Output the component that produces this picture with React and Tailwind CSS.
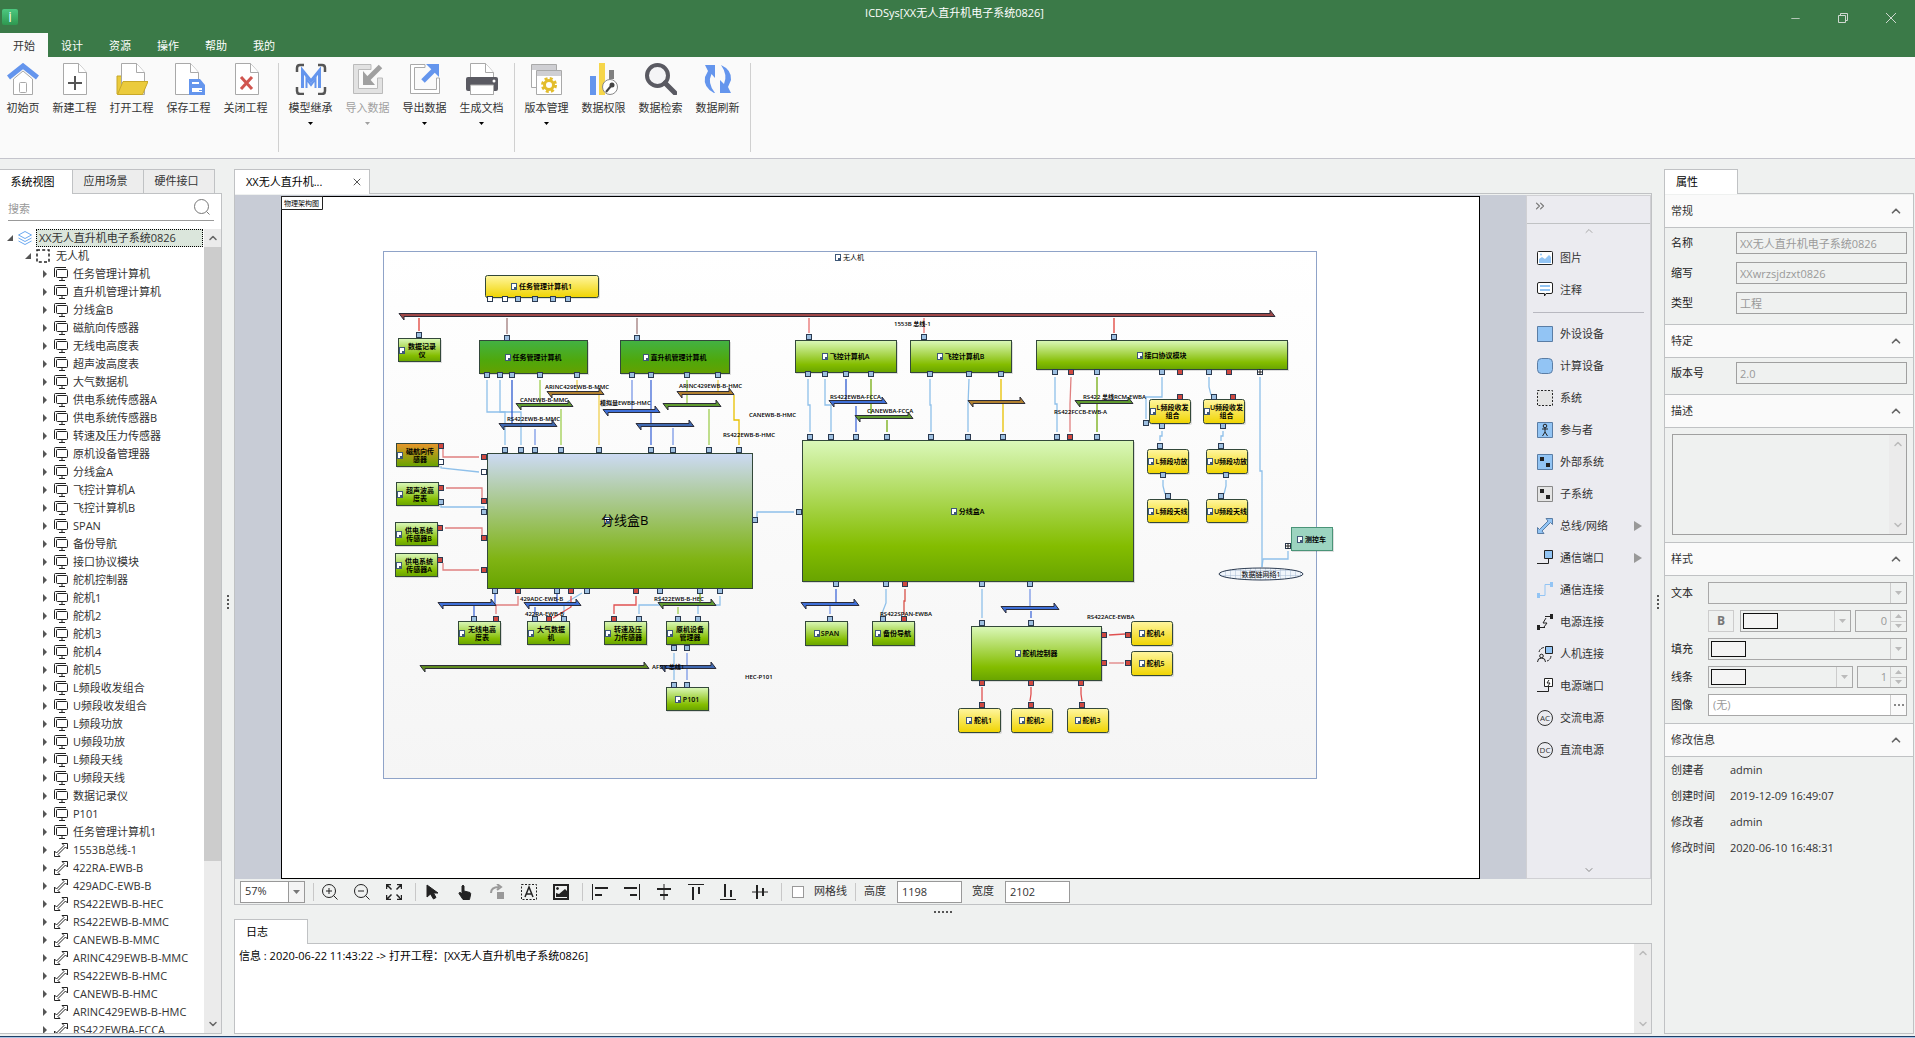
import React, { useState } from 'react';
import { ChevronDown, ChevronUp, ChevronsRight, Minus, X } from 'lucide-react';

const RIBBON_TABS = ['开始', '设计', '资源', '操作', '帮助', '我的'];

const RIBBON_GROUPS = [
  [
    { label: '初始页', icon: 'home', narrow: true },
    { label: '新建工程', icon: 'new' },
    { label: '打开工程', icon: 'open' },
    { label: '保存工程', icon: 'save' },
    { label: '关闭工程', icon: 'close' },
  ],
  [
    { label: '模型继承', icon: 'model', menu: true },
    { label: '导入数据', icon: 'import', menu: true, disabled: true },
    { label: '导出数据', icon: 'export', menu: true },
    { label: '生成文档', icon: 'print', menu: true },
  ],
  [
    { label: '版本管理', icon: 'version', menu: true },
    { label: '数据权限', icon: 'permission' },
    { label: '数据检索', icon: 'search' },
    { label: '数据刷新', icon: 'refresh' },
  ],
];

const DEVICES = [
  '任务管理计算机', '直升机管理计算机', '分线盒B', '磁航向传感器', '无线电高度表', '超声波高度表',
  '大气数据机', '供电系统传感器A', '供电系统传感器B', '转速及压力传感器', '原机设备管理器', '分线盒A',
  '飞控计算机A', '飞控计算机B', 'SPAN', '备份导航', '接口协议模块', '舵机控制器', '舵机1', '舵机2',
  '舵机3', '舵机4', '舵机5', 'L频段收发组合', 'U频段收发组合', 'L频段功放', 'U频段功放', 'L频段天线',
  'U频段天线', '数据记录仪', 'P101', '任务管理计算机1',
];

const BUSES = [
  '1553B总线-1', '422RA-EWB-B', '429ADC-EWB-B', 'RS422EWB-B-HEC', 'RS422EWB-B-MMC', 'CANEWB-B-MMC',
  'ARINC429EWB-B-MMC', 'RS422EWB-B-HMC', 'CANEWB-B-HMC', 'ARINC429EWB-B-HMC', 'RS422EWBA-FCCA',
];

const PALETTE_TOP = [
  { label: '图片', icon: 'image' },
  { label: '注释', icon: 'note' },
];

const PALETTE = [
  { label: '外设设备', icon: 'square' },
  { label: '计算设备', icon: 'round' },
  { label: '系统', icon: 'system' },
  { label: '参与者', icon: 'actor' },
  { label: '外部系统', icon: 'external' },
  { label: '子系统', icon: 'sub' },
  { label: '总线/网络', icon: 'bus', menu: true },
  { label: '通信端口', icon: 'port', menu: true },
  { label: '通信连接', icon: 'link' },
  { label: '电源连接', icon: 'power' },
  { label: '人机连接', icon: 'human' },
  { label: '电源端口', icon: 'powerPort' },
  { label: '交流电源', icon: 'ac' },
  { label: '直流电源', icon: 'dc' },
];

/* ---------- icons ---------- */

const Sheet = ({ x = 4 }) => (
  <g fill="#fff" stroke="#a9a9a9">
    <path d={`M${x + 0.5} .5h15l8 9v22h-23z`} />
    <path d={`M${x + 15.5} .5v9h8`} />
  </g>
);

const RIBBON_ICONS = {
  home: (
    <>
      <path d="M6.500 16v15.500h19V16L16 8z" fill="#fff" stroke="#a9a9a9" />
      <rect x="12.500" y="19.500" width="7" height="10" rx="1" fill="none" stroke="#a9a9a9" />
      <path d="M1.500 14.500 16 3l14.500 11.500" fill="none" stroke="#6495ed" strokeWidth="5" />
    </>
  ),
  new: (
    <>
      <Sheet />
      <path d="M16 13v14M9 20h14" stroke="#555" strokeWidth="2" />
    </>
  ),
  open: (
    <>
      <path d="M1 31V13h6v18z" fill="#ebcb3c" stroke="#c8a828" />
      <Sheet x={5} />
      <path d="M7 18.500h25L26.500 31.500H1.500z" fill="#ebcb3c" stroke="#c8a828" />
    </>
  ),
  save: (
    <>
      <Sheet x={2} />
      <path d="M16 16h11l5 6v10H16z" fill="#6495ed" />
      <path d="M19 19h7v2h-7zM19 25h10v4H19z" fill="#fff" />
      <path d="M26 27h3v1h-3z" fill="#6495ed" />
    </>
  ),
  close: (
    <>
      <Sheet x={5} />
      <path d="m11 14 11 12M22 14 11 26" stroke="#d0554f" strokeWidth="3" />
    </>
  ),
  model: (
    <>
      <path d="M2 9V5q0-3 3-3h4M23 2h4q3 0 3 3v4M30 24v4q0 3-3 3h-4M9 31H5q-3 0-3-3v-4" fill="none" stroke="#555" strokeWidth="2.500" />
      <path d="M7.500 25V7.500L16 18l8.500-10.500V25" fill="none" stroke="#6495ed" strokeWidth="3" />
      <path d="M11.500 25v-9l4.500 6 4.500-6v9" fill="none" stroke="#6495ed" strokeWidth="2" />
    </>
  ),
  import: (
    <>
      <path d="M19 1.500H1.500v29h29V15h-5v10.500h-19v-19H19z" fill="#e2e2e2" stroke="#bbb" />
      <path d="M28.500 3.500 15 17" stroke="#a0a0a0" strokeWidth="5" />
      <path d="M11 8v14h12z" fill="#a0a0a0" />
    </>
  ),
  export: (
    <>
      <path d="M16 1.500H1.500v29h29V15h-3v11.500h-22v-22H16z" fill="#fff" stroke="#a9a9a9" />
      <path d="M14 18 26 6" stroke="#6495ed" strokeWidth="5" />
      <path d="M17 1h13v13z" fill="#6495ed" />
    </>
  ),
  print: (
    <>
      <Sheet />
      <rect y="14" width="32" height="14" rx="2" fill="#5a5a62" />
      <path d="M4.500 22h23v9.500h-23z" fill="#fff" stroke="#a9a9a9" />
      <circle cx="28" cy="18" r="1.500" fill="#fff" />
    </>
  ),
  version: (
    <>
      <path d="M.5 1.500h25v23H.5z" fill="#fff" stroke="#a9a9a9" />
      <path d="M1 2h24v5H1z" fill="#cfcfd3" />
      <path d="M5.500 7.500h25v24h-25z" fill="#fff" stroke="#a9a9a9" />
      <path d="M6 8h24v5H6z" fill="#cfcfd3" />
      <circle cx="18" cy="22" r="4.500" fill="none" stroke="#e3bd2c" strokeWidth="3" />
      <circle cx="18" cy="22" r="6.500" fill="none" stroke="#e3bd2c" strokeWidth="3" strokeDasharray="2.900 2.200" />
    </>
  ),
  permission: (
    <>
      <path d="M2 13h6v19H2z" fill="#6495ed" />
      <path d="M11 0h6v32h-6z" fill="#f6d64a" />
      <path d="M21 7h5v9h-5z" fill="#808080" />
      <circle cx="22" cy="24" r="7.500" fill="#fff" stroke="#888" />
      <path d="m18 29 5-6" stroke="#444" strokeWidth="2" />
      <circle cx="24" cy="22" r="2.500" fill="#444" />
    </>
  ),
  search: (
    <>
      <circle cx="12.500" cy="12.500" r="10.500" fill="#f4f4f6" stroke="#5a5a62" strokeWidth="4" />
      <path d="m20 20 10 10" stroke="#5a5a62" strokeWidth="5" strokeLinecap="round" />
    </>
  ),
  refresh: (
    <>
      <path d="M12 30Q1 24 3 14L6 8 3 2h10v13L9.500 11Q5 20 13 30z" fill="#6495ed" />
      <path d="M19 2q11 5 10 15l-3 7 3 6H18V17l4 4q4-9-3-19z" fill="#6495ed" />
    </>
  ),
};

const PALETTE_ICONS = {
  image: (
    <>
      <rect x=".5" y="1.500" width="15" height="13" rx="1" fill="#fff" stroke="#222" />
      <path d="M2 13V9l3-2 3 2 4-4 2 2v6z" fill="#92c4f4" />
      <circle cx="4" cy="4.500" r="1" fill="#92c4f4" />
    </>
  ),
  note: (
    <>
      <path d="M2 .5h12q1.500 0 1.500 1.500v8q0 1.500-1.500 1.500H9L7.500 14V11.500H2Q.5 11.500.5 10V2Q.5.5 2 .5z" fill="#fff" stroke="#222" />
      <path d="M3 4h10M3 8h10" stroke="#92c4f4" strokeWidth="2" />
    </>
  ),
  square: <path d="M.5.5h15v15H.5z" fill="#92c4f4" stroke="#5a7da5" />,
  round: <rect x=".5" y=".5" width="15" height="15" rx="4" fill="#92c4f4" stroke="#5a7da5" />,
  system: <path d="M.5.5h15v15H.5z" fill="#e4e4e4" stroke="#222" strokeDasharray="2 1.500" />,
  actor: (
    <>
      <path d="M.5.5h15v15H.5z" fill="#92c4f4" stroke="#5a7da5" />
      <path d="M8 6v4M5 7h6M8 10l-2.500 4M8 10l2.500 4" fill="none" stroke="#222" />
      <circle cx="8" cy="4" r="1.800" fill="none" stroke="#222" />
    </>
  ),
  external: (
    <>
      <path d="M.5.5h15v15H.5z" fill="#92c4f4" stroke="#5a7da5" />
      <path d="M3 3h4v4H3zM9 9h4v4H9z" fill="#222" />
    </>
  ),
  sub: (
    <>
      <path d="M.5.5h15v15H.5z" fill="#e4e4e4" stroke="#888" />
      <path d="M3 3h4v4H3zM9 9h4v4H9z" fill="#222" />
    </>
  ),
  bus: <path d="M15.500.5v6l-2-2-8.500 8.500 2 2.500H.5v-6l2 2L11 3 9 .5z" fill="#92c4f4" stroke="#5a7da5" />,
  port: (
    <>
      <path d="M0 13.500h11.500V9" fill="none" stroke="#222" />
      <path d="M7.500.5h8v8h-8z" fill="#92c4f4" stroke="#222" />
    </>
  ),
  link: (
    <>
      <path d="M2 13.500h6V2.500h6" fill="none" stroke="#92c4f4" />
      <path d="M0 11h3v5H0zM13 0h3v5h-3z" fill="#92c4f4" />
    </>
  ),
  power: (
    <>
      <path d="M2 13.500h6M8 2.500h6" fill="none" stroke="#222" />
      <path d="M0 11h3v5H0zM13 0h3v5h-3z" fill="#222" />
      <path d="M9 4 6 9h4l-3 4" fill="none" stroke="#222" />
    </>
  ),
  human: (
    <>
      <path d="M8.500.5h7v7h-7z" fill="#92c4f4" stroke="#222" />
      <circle cx="4.500" cy="10" r="1.800" fill="none" stroke="#222" />
      <path d="M.5 16q0-4 4-4t4 4" fill="none" stroke="#222" />
      <path d="M2 6q1-4 5-4.500M14 10q-.5 4-4 5" fill="none" stroke="#222" strokeDasharray="3 1" />
    </>
  ),
  powerPort: (
    <>
      <path d="M0 13.500h11.500V9" fill="none" stroke="#222" />
      <path d="M7.500.5h8v8h-8z" fill="#fff" stroke="#222" />
      <path d="M12 2 10 5h3l-2 3" fill="none" stroke="#222" />
    </>
  ),
  ac: (
    <>
      <circle cx="8" cy="8" r="7.500" fill="none" stroke="#333" />
      <text x="8" y="11" textAnchor="middle" fontSize="8" fill="#333">AC</text>
    </>
  ),
  dc: (
    <>
      <circle cx="8" cy="8" r="7.500" fill="none" stroke="#333" />
      <text x="8" y="11" textAnchor="middle" fontSize="8" fill="#333">DC</text>
    </>
  ),
};

const DeviceIcon = () => (
  <svg width="14" height="14" viewBox="0 0 14 14" fill="none" stroke="#222" className="shrink-0">
    <path d="M.5 10V1.500q0-1 1-1H12" />
    <rect x="2.500" y="2.500" width="11" height="8" rx="1" />
    <path d="M8 11v2M5 13.500h6" />
  </svg>
);

const BusIcon = () => (
  <svg width="14" height="14" viewBox="0 0 14 14" fill="none" stroke="#222" className="shrink-0">
    <path d="M13.500.5V6l-2-2L4 11.500l2 2H.5V8l2 2L10 2.500l-2-2z" />
  </svg>
);

/* ---------- toolbar icons, 16px box ---------- */

const TOOLS = {
  放大: <><circle cx="7" cy="7" r="6.500" /><path d="M4 7h6M7 4v6M11.500 11.500l4 4" /></>,
  缩小: <><circle cx="7" cy="7" r="6.500" /><path d="M4 7h6M11.500 11.500l4 4" /></>,
  适合窗口: <path d="M.5 5V.5H5M.5.5l5 5M11 .5h4.500V5M15.500.5l-5 5M.5 11v4.500H5M.5 15.500l5-5M11 15.500h4.500V11M15.500 15.500l-5-5" strokeWidth="1.500" />,
  选择: <path d="M2 1v12l3.500-3 3 5 2.500-1.500L8.500 9H13z" fill="#222" />,
  平移: <path d="M5 2q1-1.500 2 0v5l6 1.500q1 .5.500 2.500l-1 4.500H6L2 9.500q0-1.500 1.500-1L5 10z" fill="#222" />,
  旋转: <><path d="M2 9q0-6 8-6M8 0l4 3-4 3" stroke="#999" strokeWidth="2" /><path d="M8 8h7v7H8z" fill="#999" stroke="none" /></>,
  文本: <><path d="M.5.5h15v15H.5z" strokeDasharray="2 1.500" /><path d="m4 13 4-10 4 10M5.500 10h5" strokeWidth="1.500" /></>,
  图像: <><path d="M1 1h14v14H1z" strokeWidth="2" /><path d="M3 13V9l3 1 6-5 2 2v6z" fill="#222" stroke="none" /><circle cx="4.500" cy="4.500" r="1" fill="#222" /></>,
  左对齐: <><path d="M.5 0v16" /><path d="M3 4h13M3 11h7" strokeWidth="2" /></>,
  右对齐: <><path d="M15.500 0v16" /><path d="M0 4h13M6 11h7" strokeWidth="2" /></>,
  水平居中: <><path d="M8 0v16" /><path d="M1 5h14M4 11h8" strokeWidth="2" /></>,
  顶对齐: <><path d="M0 .5h16" /><path d="M5 3v13M11 3v7" strokeWidth="2" /></>,
  底对齐: <><path d="M0 15.500h16" /><path d="M5 0v13M11 6v7" strokeWidth="2" /></>,
  垂直居中: <><path d="M0 8h16" /><path d="M5 1v14M11 4v8" strokeWidth="2" /></>,
};

const TOOL_GROUPS = [
  ['放大', '缩小', '适合窗口'],
  ['选择', '平移', '旋转', '文本', '图像'],
  ['左对齐', '右对齐', '水平居中', '顶对齐', '底对齐', '垂直居中'],
];

/* ---------- diagram data ---------- */

// fill, x, y, w, h, text lines
const NODES = [
  ['yellow', 485, 275, 113, 22, '任务管理计算机1'],
  ['green', 398, 338, 42, 23, '数据记录', '仪'],
  ['dark', 479, 340, 108, 33, '任务管理计算机'],
  ['dark', 620, 340, 109, 33, '直升机管理计算机'],
  ['green', 795, 340, 101, 32, '飞控计算机A'],
  ['green', 910, 340, 101, 32, '飞控计算机B'],
  ['green', 1036, 340, 251, 29, '接口协议模块'],
  ['yellow', 1149, 399, 41, 24, 'L频段收发', '组合'],
  ['yellow', 1203, 399, 41, 24, 'U频段收发', '组合'],
  ['yellow', 1147, 449, 41, 24, 'L频段功放'],
  ['yellow', 1206, 449, 41, 24, 'U频段功放'],
  ['yellow', 1147, 499, 41, 23, 'L频段天线'],
  ['yellow', 1206, 499, 41, 23, 'U频段天线'],
  ['green', 802, 440, 331, 141, '分线盒A'],
  ['teal', 1291, 527, 41, 23, '测控车'],
  ['orange', 396, 443, 42, 23, '磁航向传', '感器'],
  ['green', 396, 482, 42, 23, '超声波高', '度表'],
  ['green', 395, 522, 42, 23, '供电系统', '传感器B'],
  ['green', 395, 553, 42, 23, '供电系统', '传感器A'],
  ['green', 458, 621, 42, 23, '无线电高', '度表'],
  ['green', 527, 621, 42, 23, '大气数据', '机'],
  ['green', 604, 621, 42, 23, '转速及压', '力传感器'],
  ['green', 666, 621, 42, 23, '原机设备', '管理器'],
  ['green', 666, 687, 42, 23, 'P101'],
  ['green', 805, 621, 42, 24, 'SPAN'],
  ['green', 872, 621, 42, 24, '备份导航'],
  ['green', 971, 626, 130, 54, '舵机控制器'],
  ['yellow', 1131, 621, 41, 24, '舵机4'],
  ['yellow', 1131, 651, 41, 24, '舵机5'],
  ['yellow', 958, 708, 42, 24, '舵机1'],
  ['yellow', 1011, 708, 41, 24, '舵机2'],
  ['yellow', 1067, 708, 41, 24, '舵机3'],
];

const PORTS = {
  blue: [
    [518, 299], [535, 299], [553, 299], [568, 299], [419, 335], [507, 338], [637, 338], [809, 337], [924, 337], [1114, 337],
    [487, 375], [500, 375], [512, 375], [540, 375], [577, 375], [632, 375], [651, 375], [687, 375], [718, 375],
    [808, 374], [825, 374], [846, 374], [871, 374], [930, 374], [969, 374], [1001, 374],
    [1055, 372], [1097, 372], [1162, 372], [1209, 372], [1146, 423], [1162, 426], [1214, 397], [1223, 426],
    [1160, 446], [1163, 475], [1221, 446], [1226, 475], [1168, 496], [1221, 496],
    [810, 437], [831, 437], [856, 437], [887, 437], [931, 437], [968, 437], [1003, 437], [1057, 437], [1097, 437],
    [799, 512], [836, 584], [886, 584], [982, 584], [1030, 584],
    [505, 450], [521, 450], [535, 450], [561, 450], [599, 450], [651, 450], [673, 450], [709, 450], [739, 450],
    [484, 512], [755, 520], [495, 591], [557, 591], [587, 591], [660, 591], [700, 591], [720, 591],
    [441, 502], [474, 619], [535, 619], [564, 619], [639, 619], [678, 619], [698, 619], [674, 648], [687, 648],
    [674, 685], [687, 685], [830, 619], [883, 619], [982, 623], [1031, 623],
  ],
  red: [
    [1071, 372], [1180, 372], [1229, 372], [1180, 397], [1233, 397], [1070, 437], [905, 584],
    [441, 446], [441, 488], [440, 528], [440, 560], [484, 457], [484, 501], [484, 538], [484, 570],
    [518, 591], [571, 591], [636, 591], [496, 619], [549, 619], [614, 619], [904, 619],
    [1104, 635], [1104, 663], [1128, 635], [1128, 663], [982, 683], [1031, 683], [1081, 683],
    [982, 705], [1031, 705], [1082, 705],
  ],
  white: [[490, 299], [505, 299], [441, 462], [484, 472], [1260, 372], [1288, 546]],
};

const WIRES = [
  ['#e04038', '419,318 419,331'], ['#a07c7c', '507,318 507,334'], ['#a07c7c', '637,318 637,334'],
  ['#e87070', '809,318 809,333'], ['#e87070', '924,318 924,333'], ['#e04038', '1114,318 1114,333'],
  ['#8fc0ea', '487,380 487,412 505,412 505,445'], ['#8fc0ea', '500,380 500,412 521,412 521,445'],
  ['#2f5bd0', '512,380 512,423'], ['#7a98e6', '535,429 535,445'],
  ['#9fce50', '540,380 540,403'], ['#9fce50', '561,409 561,445'],
  ['#f0d050', '577,380 577,391'], ['#f0d050', '599,395 599,445'],
  ['#7a98e6', '632,380 632,410'], ['#4169d8', '651,380 651,445'], ['#7a98e6', '673,428 673,445'],
  ['#9fce50', '687,380 687,405'], ['#9fce50', '709,409 709,445'],
  ['#f0d050', '718,380 718,391'], ['#e8c000', '734,395 734,420 739,420 739,445'],
  ['#8fc0ea', '808,379 808,405 810,405 810,432'], ['#8fc0ea', '825,379 825,405 831,405 831,432'],
  ['#2f5bd0', '846,379 846,401'], ['#4169d8', '856,406 856,432'],
  ['#74ac10', '871,379 871,414'], ['#74ac10', '887,420 887,432'],
  ['#8fc0ea', '930,379 930,405 931,405 931,432'], ['#8fc0ea', '969,379 968,405 968,432'],
  ['#e8c000', '1001,379 1001,402 1003,402 1003,432'], ['#8fc0ea', '1055,377 1055,404 1057,404 1057,432'],
  ['#e08080', '1071,377 1070,404 1070,432'], ['#74ac10', '1097,377 1097,432'],
  ['#8fc0ea', '1162,377 1162,397 1146,397 1146,419'], ['#8fc0ea', '1209,377 1209,387 1211,395'],
  ['#8fc0ea', '1260,377 1260,471 1262,471 1262,567'], ['#8fc0ea', '1288,551 1288,559 1263,559 1262,567'],
  ['#8fc0ea', '1162,431 1162,436 1160,436 1160,441'], ['#8fc0ea', '1163,480 1163,486 1165,494'],
  ['#8fc0ea', '1223,431 1223,436 1221,436 1221,441'], ['#8fc0ea', '1226,480 1226,486 1224,494'],
  ['#8fc0ea', '757,520 757,512 794,512'],
  ['#e08080', '443,448 443,457 479,457'], ['#8fc0ea', '441,466 441,468 479,472'],
  ['#e08080', '446,488 482,488 482,498'], ['#8fc0ea', '441,505 441,507 484,507 484,512'],
  ['#e08080', '445,528 482,528 482,535'], ['#e08080', '443,563 443,570 479,570'],
  ['#4169d8', '495,594 495,604'], ['#e08080', '518,596 518,605 496,605 496,614'], ['#4169d8', '474,606 474,619'],
  ['#4169d8', '557,594 557,604'], ['#4169d8', '535,607 535,615'], ['#8fc0ea', '582,593 564,604 564,614'],
  ['#e05050', '571,596 571,607 553,618'], ['#e05050', '636,596 636,605 614,605 614,614'],
  ['#8fc0ea', '660,596 660,605 639,605 639,614'], ['#74ac10', '700,594 700,604'], ['#9fce50', '678,607 678,614'],
  ['#8fc0ea', '720,596 720,605 698,605 698,614'], ['#8fc0ea', '674,653 674,680'], ['#7a98e6', '687,653 687,680'],
  ['#4169d8', '836,589 836,603'], ['#7a98e6', '830,606 830,614'], ['#8fc0ea', '886,589 886,603 881,616'],
  ['#d85048', '905,589 905,601 904,601 904,615'], ['#8fc0ea', '982,589 982,618'],
  ['#7a98e6', '1030,589 1030,607'], ['#4169d8', '1031,611 1031,618'],
  ['#e05050', '1109,635 1125,634'], ['#e08080', '1109,663 1124,663'],
  ['#e05050', '982,687 982,701'], ['#e05050', '1031,687 1031,694 1030,701'], ['#e05050', '1081,687 1081,694 1082,701'],
];

// fill, x1, x2, y
const BUS_BARS = [
  ['#a04848', 399, 1275, 315],
  ['#b08030', 547, 604, 393], ['#5f9a30', 516, 573, 405], ['#3f68b0', 499, 557, 425],
  ['#3f70d8', 603, 660, 411], ['#b08030', 677, 734, 393], ['#5f9a30', 663, 721, 405], ['#3f68b0', 636, 694, 425],
  ['#3f70d8', 829, 887, 402], ['#5f9a30', 855, 913, 417], ['#b08030', 968, 1025, 402], ['#5f9a30', 1075, 1133, 402],
  ['#3f70d8', 438, 496, 604], ['#3f70d8', 524, 581, 604], ['#5f9a30', 658, 716, 604],
  ['#5f8a20', 420, 649, 667], ['#3f68b0', 660, 716, 667], ['#3f70d8', 801, 859, 604], ['#3f70d8', 1001, 1059, 608],
];

const BUS_LABELS = [
  ['ARINC429EWB-B-MMC', 545, 389], ['CANEWB-B-MMC', 520, 402], ['RS422EWB-B-MMC', 507, 421],
  ['模拟量EWBB-HMC', 600, 405], ['ARINC429EWB-B-HMC', 679, 388], ['CANEWB-B-HMC', 749, 417],
  ['RS422EWB-B-HMC', 723, 437], ['1553B 总线-1', 894, 326], ['RS422EWBA-FCCA', 830, 399],
  ['CANEWBA-FCCA', 867, 413], ['RS422 总线RCM-EWBA', 1083, 399], ['RS422FCCB-EWB-A', 1054, 414],
  ['429ADC-EWB-B', 520, 601], ['422RA-EWB-B', 525, 616], ['RS422EWB-B-HEC', 654, 601],
  ['AFDX 总线1', 652, 669], ['HEC-P101', 745, 679], ['RS422SPAN-EWBA', 880, 616], ['RS422ACE-EWBA', 1087, 619],
];

const PORT_FILL = { blue: '#9dbfe0', red: '#d04840', white: '#ffffff' };

const textWidth = (s) => [...s].reduce((w, c) => w + (c.charCodeAt(0) > 255 ? 7 : 4), 0);

const NodeIcon = ({ x, y }) => (
  <g>
    <rect x={x + 0.5} y={y + 0.5} width="5" height="6" fill="#fff" stroke="#3f5878" />
    <rect x={x + 3} y={y + 4} width="3" height="3" fill="#3f5878" />
  </g>
);

function Node({ data }) {
  const [fill, x, y, w, h, ...lines] = data;
  const round = fill === 'yellow' ? 2 : 0;
  const multi = lines.length > 1;
  const cy = y + h / 2;
  const cx = x + w / 2 + 4;
  const iconX = multi ? x + 1 : cx - textWidth(lines[0]) / 2 - 8;
  return (
    <g>
      <rect x={x + 1} y={y + 2} width={w + 1} height={h} rx={round} fill="#000" opacity=".12" />
      <rect x={x + 0.5} y={y + 0.5} width={w} height={h} rx={round} fill={`url(#${fill})`} stroke={fill === 'teal' ? '#4a9478' : '#33483a'} />
      <NodeIcon x={Math.round(iconX)} y={Math.round(cy - 3)} />
      {lines.map((line, i) => (
        <text key={line} x={multi ? cx - 1 : cx} y={cy + 3 + (multi ? i * 8 - 4 : 0)} textAnchor="middle" fontWeight="600">
          {line}
        </text>
      ))}
    </g>
  );
}

function BusBar({ data: [fill, x1, x2, y] }) {
  return (
    <path
      d={`M${x1} ${y - 1.5}H${x2 - 5}V${y - 5}L${x2} ${y + 1.5}H${x1 + 5}V${y + 5}Z`}
      fill={fill}
      stroke="#2c2c38"
    />
  );
}

function Diagram() {
  return (
    <svg width="1199" height="683" viewBox="281 196 1199 683" className="shrink-0 bg-white text-[7px] font-['Open_Sans','Noto_Sans_CJK_SC',sans-serif]">
      <defs>
        <linearGradient id="frame" x2="0" y2="1"><stop stopColor="#fff" /><stop offset="1" stopColor="#f5f5f5" /></linearGradient>
        <linearGradient id="green" x2="0" y2="1"><stop stopColor="#dbf8ba" /><stop offset=".75" stopColor="#84bd00" /><stop offset="1" stopColor="#68a400" /></linearGradient>
        <linearGradient id="dark" x2="0" y2="1"><stop stopColor="#42b244" /><stop offset=".6" stopColor="#4fa80c" /><stop offset="1" stopColor="#64a000" /></linearGradient>
        <linearGradient id="orange" x2="0" y2="1"><stop stopColor="#e8962c" /><stop offset="1" stopColor="#68a400" /></linearGradient>
        <linearGradient id="yellow" x2="0" y2="1"><stop stopColor="#fff6a0" /><stop offset="1" stopColor="#f0d400" /></linearGradient>
        <linearGradient id="teal" x2="0" y2="1"><stop stopColor="#9cd4c0" /><stop offset="1" stopColor="#9cd4c0" /></linearGradient>
        <linearGradient id="box" x2="0" y2="1"><stop stopColor="#ccdaf4" /><stop offset=".78" stopColor="#80b414" /><stop offset="1" stopColor="#68a400" /></linearGradient>
        <pattern id="hatch" width="5" height="5" patternUnits="userSpaceOnUse"><path d="M0 0h5M0 0v5" stroke="#a8bcd4" /></pattern>
      </defs>

      <rect x="281.5" y="196.5" width="1198" height="682" fill="#fff" stroke="#000" />
      <path d="M281.500 196.500h41v13h-41z" fill="#fff" stroke="#222" />
      <text x="284" y="206">物理架构图</text>

      <rect x="383.5" y="251.500" width="933" height="527" fill="url(#frame)" stroke="#8fa3c8" />
      <NodeIcon x={835} y={254} />
      <text x="843" y="260">无人机</text>

      {/* distribution box B */}
      <rect x="487.5" y="453.500" width="265" height="135" fill="url(#box)" stroke="#33483a" />
      <NodeIcon x={604} y={517} />
      <text x="601" y="525" fontSize="13">分线盒B</text>

      {WIRES.map(([color, points]) => (
        <polyline key={points} points={points} fill="none" stroke={color} strokeWidth="1.300" />
      ))}
      {NODES.map((n) => <Node key={n.slice(5).join('')} data={n} />)}
      {BUS_BARS.map((b) => <BusBar key={b.join()} data={b} />)}
      {Object.entries(PORTS).map(([kind, list]) =>
        list.map(([x, y]) => (
          <rect key={`${x},${y}`} x={x - 2.5} y={y - 2.5} width="5" height="5" fill={PORT_FILL[kind]} stroke="#2b3a50" />
        ))
      )}
      <path d="M1257 372h6M1260 369v6M1285 546h6M1288 543v6" stroke="#222" />

      <ellipse cx="1261" cy="574" rx="42" ry="6" fill="#f0f5fb" />
      <ellipse cx="1261" cy="574" rx="42" ry="6" fill="url(#hatch)" stroke="#2b3a50" />
      <text x="1261" y="577" textAnchor="middle">数据链网络1</text>

      {BUS_LABELS.map(([text, x, y]) => (
        <text key={text} x={x} y={y} fontSize="6" fontWeight="600">{text}</text>
      ))}
    </svg>
  );
}

/* ---------- shell ---------- */

function TitleBar() {
  return (
    <header className="bg-[#3b7a48] text-white">
      <div className="h-[33px] flex items-start">
        <div className="flex-1">
          <div className="w-4 h-4 mt-[9px] ml-[2px] rounded-xs bg-linear-to-b from-[#4cc880] to-[#2f9850] text-[14px] leading-4 text-center">i</div>
        </div>
        <h1 className="text-[11px] leading-[26px] pr-[6px]">ICDSys[XX无人直升机电子系统0826]</h1>
        <div className="flex-1 flex justify-end text-[#cfd8d0]">
          <button aria-label="最小化" className="w-12 h-9 grid place-items-center"><Minus size={13} strokeWidth={1.5} /></button>
          <button aria-label="还原" className="w-12 h-9 grid place-items-center">
            <svg width="10" height="10" viewBox="0 0 10 10" fill="none" stroke="currentColor"><path d="M.5 2.500h7v7h-7zM2.500 2.500v-2h7v7h-2" /></svg>
          </button>
          <button aria-label="关闭" className="w-12 h-9 grid place-items-center">
            <svg width="10" height="10" viewBox="0 0 10 10" fill="none" stroke="currentColor"><path d="m0 0 10 10M10 0 0 10" /></svg>
          </button>
        </div>
      </div>
      <nav className="flex">
        {RIBBON_TABS.map((t, i) => (
          <button key={t} className={`w-12 h-6 pt-[2px] ${i === 0 ? 'bg-[#fafafa] text-[#333]' : ''}`}>{t}</button>
        ))}
      </nav>
    </header>
  );
}

function Ribbon() {
  return (
    <div className="h-[102px] flex bg-[#fafafa] border-b border-[#c4c4cc] pt-[6px] pb-[6px]">
      {RIBBON_GROUPS.map((group, i) => (
        <div key={i} className="flex border-r border-[#d0d0d0] pr-1 mr-[3px]">
          {group.map((item) => (
            <button
              key={item.label}
              disabled={item.disabled}
              className={`${item.narrow ? 'w-[46px]' : 'w-[57px]'} flex flex-col items-center whitespace-nowrap ${item.disabled ? 'text-[#a0a0a0]' : 'text-[#333]'}`}
            >
              <svg width="32" height="32" viewBox="0 0 32 32">{RIBBON_ICONS[item.icon]}</svg>
              <span className="mt-[5px] leading-4">{item.label}</span>
              {item.menu && (
                <svg width="5" height="3" viewBox="0 0 5 3" className={`mt-[6px] ${item.disabled ? 'text-[#a0a0a0]' : 'text-black'}`} fill="currentColor"><path d="M0 0h5L2.500 3z" /></svg>
              )}
            </button>
          ))}
        </div>
      ))}
    </div>
  );
}

function ScrollBar({ thumb }) {
  return (
    <div className={`w-[17px] flex flex-col items-center bg-[#ebebeb] ${thumb ? 'text-[#666]' : 'text-[#bbb]'}`}>
      <ChevronUp size={12} strokeWidth={3} className="my-[3px] shrink-0" />
      <div className="flex-1 w-full flex flex-col">
        {thumb && <div className="h-4/5 bg-[#cccccc]" />}
      </div>
      <ChevronDown size={12} strokeWidth={3} className="my-[3px] shrink-0" />
    </div>
  );
}

function Dots({ vertical }) {
  return (
    <div className={`flex items-center justify-center gap-[2px] ${vertical ? 'w-3 flex-col' : 'h-[14px]'}`}>
      {[0, 1, 2, 3, vertical ? null : 4].map((n) => n !== null && <i key={n} className="w-[2px] h-[2px] bg-[#555]" />)}
    </div>
  );
}

const Expander = ({ open }) => (
  <svg width="8" height="8" viewBox="0 0 8 8" className="shrink-0" fill="#555">
    {open ? <path d="M7 1v6H1z" /> : <path d="M2 0l4 4-4 4z" />}
  </svg>
);

function SystemTree() {
  const [tab, setTab] = useState('系统视图');
  return (
    <aside className="w-[222px] shrink-0 flex flex-col min-h-0">
      <div className="flex h-[25px] shrink-0 border-b border-[#c0c2c4] pr-[7px]">
        {['系统视图', '应用场景', '硬件接口'].map((t) => (
          <button
            key={t}
            onClick={() => setTab(t)}
            className={`flex-1 border-t border-r border-[#c0c2c4] ${t === tab ? 'bg-white text-black -mb-px pr-[7px]' : 'bg-[#ededed] text-[#333] pr-[5px]'}`}
          >
            {t}
          </button>
        ))}
      </div>
      <div className="flex-1 min-h-0 flex flex-col bg-white border-r border-b border-[#c0c2c4]">
        <label className="ml-2 mr-[7px] h-[27px] shrink-0 flex items-center border-b border-[#999] mb-2">
          <input placeholder="搜索" className="flex-1 min-w-0 pt-1 outline-none placeholder:text-[#999]" />
          <svg width="16" height="16" viewBox="0 0 16 16" className="mr-1" fill="none" stroke="#777">
            <circle cx="7.500" cy="7.500" r="7" /><path d="m12.500 12.500 3 3" />
          </svg>
        </label>
        <div className="flex-1 min-h-0 flex">
          <ul className="flex-1 min-w-0 overflow-hidden text-[#333] leading-[18px] whitespace-nowrap">
            <li className="flex items-center h-[18px] pl-[6px] gap-1">
              <Expander open />
              <svg width="14" height="14" viewBox="0 0 14 14" fill="none" stroke="#6aa8f0" className="shrink-0">
                <path d="M7 .5 13.500 4 7 7.500.5 4zM.5 7 7 10.500 13.500 7M.5 10 7 13.500l6.500-3.500" />
              </svg>
              <button className="flex-1 text-left mr-px px-[3px] bg-[#dbe6dc] outline outline-1 -outline-offset-1 outline-dotted outline-black">XX无人直升机电子系统0826</button>
            </li>
            <li className="flex items-center h-[18px] pl-6 gap-1">
              <Expander open />
              <svg width="14" height="14" viewBox="0 0 14 14" fill="none" stroke="#222" strokeDasharray="3 2.200" strokeWidth="1.500" className="shrink-0"><path d="M1 1h12v12H1z" /></svg>
              <span className="pl-[2px]">无人机</span>
            </li>
            {DEVICES.map((d) => (
              <li key={d} className="flex items-center h-[18px] pl-[41px] gap-[5px]"><Expander /><DeviceIcon /><span>{d}</span></li>
            ))}
            {BUSES.map((b) => (
              <li key={b} className="flex items-center h-[18px] pl-[41px] gap-[5px]"><Expander /><BusIcon /><span>{b}</span></li>
            ))}
          </ul>
          <ScrollBar thumb />
        </div>
      </div>
    </aside>
  );
}

function PaletteItem({ item }) {
  return (
    <button className="h-8 flex items-center gap-[7px] pl-[10px] pr-2 text-left">
      <svg width="16" height="16" viewBox="0 0 16 16">{PALETTE_ICONS[item.icon]}</svg>
      <span className="flex-1">{item.label}</span>
      {item.menu && <svg width="8" height="10" viewBox="0 0 8 10" fill="#999"><path d="M0 0l8 5-8 5z" /></svg>}
    </button>
  );
}

function Palette() {
  return (
    <div className="w-[125px] shrink-0 flex flex-col bg-[#ebebf0] border border-[#d0d0d4] text-[#333]">
      <button aria-label="收起" className="h-7 shrink-0 pl-[6px] pb-2 flex items-center border-b border-[#c0c2c4] text-[#777]"><ChevronsRight size={14} /></button>
      <ChevronUp size={12} className="mx-auto mt-px mb-[5px] text-[#aaa]" />
      {PALETTE_TOP.map((p) => <PaletteItem key={p.label} item={p} />)}
      <hr className="mx-[6px] mt-[6px] mb-[5px] border-[#b8b8c0]" />
      {PALETTE.map((p) => <PaletteItem key={p.label} item={p} />)}
      <ChevronDown size={12} className="mx-auto mt-auto mb-[2px] text-[#888]" />
    </div>
  );
}

const Divider = ({ className = 'mx-2' }) => <span className={`w-px h-[18px] bg-[#c8c8c8] ${className}`} />;

function CanvasToolbar() {
  return (
    <div className="h-[25px] shrink-0 flex items-center pl-[5px] text-[#333]">
      <div className="w-[65px] h-[22px] flex border border-[#999] bg-white relative">
        <select aria-label="缩放" className="appearance-none w-full pl-1 pr-5"><option>57%</option></select>
        <span className="absolute right-0 h-full w-4 grid place-items-center border-l border-[#999] bg-[#f4f4f4] pointer-events-none">
          <svg width="7" height="4" viewBox="0 0 7 4" fill="#777"><path d="M0 0h7L3.500 4z" /></svg>
        </span>
      </div>
      <Divider className="ml-2 mr-1" />
      {TOOL_GROUPS.map((group, i) => (
        <React.Fragment key={i}>
          {i > 0 && <Divider className="ml-[5px] mr-px" />}
          {group.map((t) => (
            <button key={t} aria-label={t} title={t} className={`grid place-items-center h-6 ${t === '放大' ? 'w-6 mr-1' : 'w-8'}`}>
              <svg width="16" height="16" viewBox="0 0 16 16" fill="none" stroke="#222">{TOOLS[t]}</svg>
            </button>
          ))}
        </React.Fragment>
      ))}
      <Divider className="ml-[5px] mr-[10px]" />
      <label className="flex items-center gap-[10px]">
        <input type="checkbox" className="appearance-none w-3 h-3 border border-[#999] bg-white" />
        网格线
      </label>
      <Divider />
      <label className="flex items-center gap-[11px]">
        高度
        <input defaultValue="1198" className="w-[65px] h-[22px] border border-[#999] bg-white px-1" />
      </label>
      <label className="flex items-center gap-[11px] ml-[10px]">
        宽度
        <input defaultValue="2102" className="w-[65px] h-[22px] border border-[#999] bg-white px-1" />
      </label>
    </div>
  );
}

function Workspace() {
  return (
    <main className="flex-1 min-w-0 flex flex-col">
      <div className="h-[25px] shrink-0 flex border-b border-[#c0c2c4]">
        <div className="w-[136px] -mb-px flex items-center justify-between pl-[11px] pr-[6px] bg-white border border-b-0 border-[#c0c2c4] text-black">
          XX无人直升机...
          <button aria-label="关闭标签"><X size={12} className="text-[#555]" /></button>
        </div>
      </div>
      <div className="flex-1 min-h-0 flex flex-col border-x border-b border-[#c0c2c4]">
        <div className="flex-1 min-h-0 flex pt-px">
          <div className="flex-1 min-w-0 flex justify-center items-center overflow-hidden bg-[#c8ccd6]">
            <Diagram />
          </div>
          <Palette />
        </div>
        <CanvasToolbar />
      </div>
      <Dots />
      <div className="h-[25px] shrink-0 flex border-b border-[#c0c2c4]">
        <button className="w-[74px] -mb-px pl-[11px] text-left bg-white border border-b-0 border-[#c0c2c4] text-black">日志</button>
      </div>
      <div className="h-[90px] shrink-0 flex bg-white border-x border-b border-[#c0c2c4] text-black">
        <p className="flex-1 pl-1 pt-1 leading-4">信息 : 2020-06-22 11:43:22 -&gt; 打开工程：[XX无人直升机电子系统0826]</p>
        <ScrollBar />
      </div>
    </main>
  );
}

/* ---------- property panel ---------- */

function SectionTitle({ children }) {
  return (
    <h2 className="h-[33px] pl-[6px] pr-[10px] flex items-center justify-between bg-[#fafafa] border-b border-[#c0c2c4] text-[#333]">
      {children}
      <ChevronUp size={14} strokeWidth={3} className="text-[#666]" />
    </h2>
  );
}

function Section({ title, className = '', children }) {
  return (
    <section>
      <SectionTitle>{title}</SectionTitle>
      <div className={`border-b border-[#c0c2c4] pl-[6px] pr-[6px] ${className}`}>{children}</div>
    </section>
  );
}

function TextField({ label, value }) {
  return (
    <label className="flex items-center h-[30px] text-[#222]">
      <span className="w-[65px]">{label}</span>
      <input value={value} disabled className="flex-1 min-w-0 h-[22px] px-[3px] border border-[#a0a0a0] text-[#999]" />
    </label>
  );
}

function StyleSelect({ label, swatch, className = '' }) {
  return (
    <div className={`relative h-[22px] border border-[#a8a8a8] ${className}`}>
      <select aria-label={label} disabled className="appearance-none block w-full h-full" />
      {swatch && <span className="absolute left-[2px] top-[2px] w-[35px] h-4 border border-[#111] bg-[#f4f4f4]" />}
      <span className="absolute right-0 top-0 h-full w-4 grid place-items-center border-l border-[#ccc] pointer-events-none">
        <svg width="7" height="4" viewBox="0 0 7 4" fill="#bbb"><path d="M0 0h7L3.500 4z" /></svg>
      </span>
    </div>
  );
}

function Spinner({ label, value, className = '' }) {
  return (
    <div className={`h-[22px] flex border border-[#a8a8a8] ${className}`}>
      <input aria-label={label} value={value} disabled className="flex-1 min-w-0 pr-[3px] text-right text-[#999]" />
      <div className="w-4 flex flex-col border-l border-[#ccc]">
        <span className="flex-1 grid place-items-center border-b border-[#ccc]"><svg width="7" height="4" viewBox="0 0 7 4" fill="#bbb"><path d="M0 4h7L3.500 0z" /></svg></span>
        <span className="flex-1 grid place-items-center"><svg width="7" height="4" viewBox="0 0 7 4" fill="#bbb"><path d="M0 0h7L3.500 4z" /></svg></span>
      </div>
    </div>
  );
}

const StyleRow = ({ label, children }) => (
  <div className="flex items-center h-7 text-[#222]">
    <span className="w-[37px]">{label}</span>
    {children}
  </div>
);

function Properties() {
  const info = [
    ['创建者', 'admin'],
    ['创建时间', '2019-12-09 16:49:07'],
    ['修改者', 'admin'],
    ['修改时间', '2020-06-10 16:48:31'],
  ];
  return (
    <aside className="w-[250px] shrink-0 mr-px flex flex-col">
      <div className="h-[25px] shrink-0 flex border-b border-[#c0c2c4]">
        <button className="w-[74px] -mb-px pl-[11px] text-left bg-white border border-b-0 border-[#c0c2c4] text-black">属性</button>
      </div>
      <div className="flex-1 pt-px border-x border-b border-[#c0c2c4]">
        <Section title="常规" className="pb-[6px]">
          <TextField label="名称" value="XX无人直升机电子系统0826" />
          <TextField label="缩写" value="XXwrzsjdzxt0826" />
          <TextField label="类型" value="工程" />
        </Section>
        <Section title="特定" className="pb-[6px]">
          <TextField label="版本号" value="2.0" />
        </Section>
        <Section title="描述" className="pt-[6px] pb-[7px]">
          <div className="ml-px h-[101px] flex border border-[#a0a0a0]">
            <textarea aria-label="描述" disabled className="flex-1 min-w-0 resize-none" />
            <ScrollBar />
          </div>
        </Section>
        <Section title="样式" className="pt-[3px] pb-1">
          <StyleRow label="文本"><StyleSelect label="字体" className="flex-1" /></StyleRow>
          <StyleRow>
            <button disabled className="w-[26px] h-[22px] border border-[#ccc] font-bold text-[12px] text-[#777]">B</button>
            <StyleSelect label="文本颜色" swatch className="flex-1 ml-[6px] mr-1" />
            <Spinner label="字号" value="0" className="w-[52px]" />
          </StyleRow>
          <StyleRow label="填充"><StyleSelect label="填充" swatch className="flex-1" /></StyleRow>
          <StyleRow label="线条">
            <StyleSelect label="线条" swatch className="flex-1 mr-1" />
            <Spinner label="线宽" value="1" className="w-[50px]" />
          </StyleRow>
          <StyleRow label="图像">
            <div className="flex-1 h-[22px] flex bg-white border border-[#a8a8a8]">
              <input aria-label="图像" defaultValue="(无)" className="flex-1 min-w-0 px-1 text-[#999]" />
              <button aria-label="浏览" className="w-4 flex items-center justify-center gap-[2px] border-l border-[#ccc] bg-[#fafafa]">
                {[0, 1, 2].map((n) => <i key={n} className="w-[2px] h-[2px] bg-[#888]" />)}
              </button>
            </div>
          </StyleRow>
        </Section>
        <section>
          <SectionTitle>修改信息</SectionTitle>
          <dl className="grid grid-cols-[59px_1fr] pl-[6px] leading-[26px] text-[#333]">
            {info.map(([k, v]) => (
              <React.Fragment key={k}>
                <dt>{k}</dt>
                <dd>{v}</dd>
              </React.Fragment>
            ))}
          </dl>
        </section>
      </div>
    </aside>
  );
}

export default function App() {
  return (
    <div className="h-screen flex flex-col bg-[#eff1f0] text-[11px] font-['Open_Sans','Noto_Sans_CJK_SC',sans-serif] overflow-hidden">
      <TitleBar />
      <Ribbon />
      <div className="flex-1 min-h-0 flex pt-[10px]">
        <SystemTree />
        <Dots vertical />
        <Workspace />
        <Dots vertical />
        <Properties />
      </div>
      <footer className="h-1 shrink-0 border-t-2 border-[#eff1f0] bg-[#a9c4e4]">
        <div className="h-px bg-[#1f3f68]" />
      </footer>
    </div>
  );
}
